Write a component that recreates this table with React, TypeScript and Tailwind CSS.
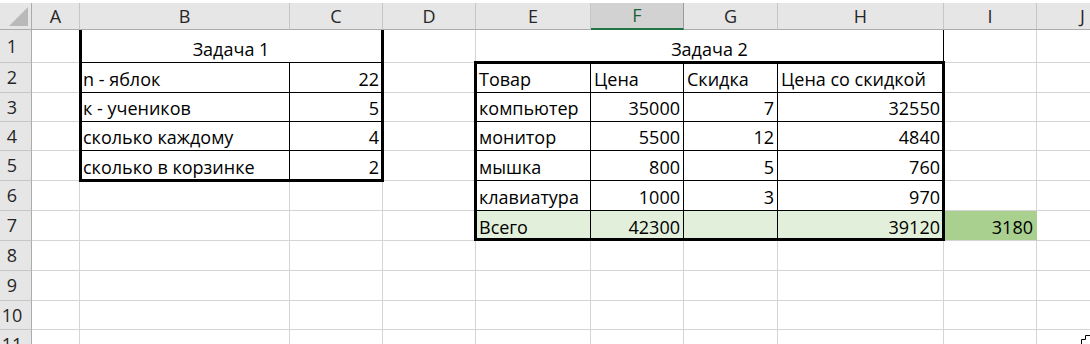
import type { ReactNode } from 'react';

type Cell = {
  text?: ReactNode;
  align?: 'left' | 'right' | 'center';
  span?: string;
  bg?: string;
  edge?: string;
};

const letters = ['A', 'B', 'C', 'D', 'E', 'F', 'G', 'H', 'I', 'J'];

const TRACKS =
  'grid grid-cols-[32px_48px_210px_93px_93px_115px_93px_94px_166px_93px_92px] grid-rows-[27px_33px_30px_29px_29px_30px_30px_30px_30px_30px_29px_30px]';

const GRID = 'border-r border-b border-r-[#d4d4d4] border-b-[#d4d4d4]';
const INK = 'border-r border-b border-r-black border-b-black';
const FILL_EDGE = 'border-r border-b border-r-[#a9d08e] border-b-[#d4d4d4]';

// sheet contents, keyed by row then column letter
const sheet: Record<number, Record<string, Cell>> = {
  1: {
    B: { text: 'Задача 1', align: 'center', span: 'col-span-2', edge: INK },
    E: { text: 'Задача 2', align: 'center', span: 'col-span-4', edge: INK },
  },
  2: {
    B: { text: 'n - яблок', edge: INK },
    C: { text: '22', align: 'right', edge: INK },
    E: { text: 'Товар', edge: INK },
    F: { text: 'Цена', edge: INK },
    G: { text: 'Скидка', edge: INK },
    H: { text: 'Цена со скидкой', edge: INK },
  },
  3: {
    B: { text: 'к - учеников', edge: INK },
    C: { text: '5', align: 'right', edge: INK },
    E: { text: 'компьютер', edge: INK },
    F: { text: '35000', align: 'right', edge: INK },
    G: { text: '7', align: 'right', edge: INK },
    H: { text: '32550', align: 'right', edge: INK },
  },
  4: {
    B: { text: 'сколько каждому', edge: INK },
    C: { text: '4', align: 'right', edge: INK },
    E: { text: 'монитор', edge: INK },
    F: { text: '5500', align: 'right', edge: INK },
    G: { text: '12', align: 'right', edge: INK },
    H: { text: '4840', align: 'right', edge: INK },
  },
  5: {
    B: { text: 'сколько в корзинке', edge: INK },
    C: { text: '2', align: 'right', edge: INK },
    E: { text: 'мышка', edge: INK },
    F: { text: '800', align: 'right', edge: INK },
    G: { text: '5', align: 'right', edge: INK },
    H: { text: '760', align: 'right', edge: INK },
  },
  6: {
    E: { text: 'клавиатура', edge: INK },
    F: { text: '1000', align: 'right', edge: INK },
    G: { text: '3', align: 'right', edge: INK },
    H: { text: '970', align: 'right', edge: INK },
  },
  7: {
    E: { text: 'Всего', edge: INK, bg: 'bg-[#e2efda]' },
    F: { text: '42300', align: 'right', edge: INK, bg: 'bg-[#e2efda]' },
    G: { edge: INK, bg: 'bg-[#e2efda]' },
    H: { text: '39120', align: 'right', edge: INK, bg: 'bg-[#e2efda]' },
    I: { text: '3180', align: 'right', edge: FILL_EDGE, bg: 'bg-[#a9d08e]' },
  },
};

// columns hidden under a merged cell
const merged: Record<number, string[]> = { 1: ['C', 'F', 'G', 'H'] };

const alignClass = {
  left: 'justify-start',
  right: 'justify-end',
  center: 'justify-center',
};

function SheetCell({ cell }: { cell?: Cell }) {
  const c = cell ?? {};
  return (
    <div
      className={`flex items-end overflow-hidden whitespace-nowrap px-[3px] pb-[2px] leading-[22px] text-black ${
        alignClass[c.align ?? 'left']
      } ${c.span ?? ''} ${c.bg ?? 'bg-white'} ${c.edge ?? GRID}`}
    >
      {c.text}
    </div>
  );
}

function ColumnHeader({ letter }: { letter: string }) {
  const active = letter === 'F';
  return (
    <div
      className={`flex items-center justify-center border-r ${
        active
          ? 'border-r-[#9b9b9b] border-b-2 border-b-[#217346] bg-[#d2d2d2] text-[#1d5f3a]'
          : 'border-r-[#c6c6c6] border-b border-b-[#ababab] bg-[#e6e6e6] text-[#262626]'
      }`}
    >
      {letter}
    </div>
  );
}

export default function App() {
  const rows = Array.from({ length: 11 }, (_, i) => i + 1);

  return (
    <div
      className="relative h-[344px] w-[1090px] overflow-hidden bg-white text-[18px]"
      style={{ fontFamily: '"Open Sans", "Liberation Sans", sans-serif' }}
    >
      <div className="h-[3px] bg-white" />
      <div className="grid">
        {/* cells */}
        <div className={`${TRACKS} [grid-area:1/1]`}>
          <div className="flex items-end justify-end border-r border-b border-r-[#ababab] border-b-[#ababab] bg-[#e6e6e6] p-[3px]">
            <svg width="19" height="19" viewBox="0 0 19 19">
              <path d="M19 0 L19 19 L0 19 Z" fill="#b9b9b9" />
            </svg>
          </div>
          {letters.map((l) => (
            <ColumnHeader key={l} letter={l} />
          ))}

          {rows.map((r) => (
            <div key={r} className="contents">
              <div className="flex items-center justify-center border-r border-b border-r-[#ababab] border-b-[#c6c6c6] bg-[#e6e6e6] pr-[7px] text-[#262626]">
                {r}
              </div>
              {letters
                .filter((l) => !(merged[r] ?? []).includes(l))
                .map((l) => (
                  <SheetCell key={l} cell={sheet[r]?.[l]} />
                ))}
            </div>
          ))}
        </div>

        {/* thick table outlines, laid on the same tracks */}
        <div className={`${TRACKS} pointer-events-none [grid-area:1/1]`}>
          <div className="col-start-3 col-end-5 row-start-2 row-end-7 -ml-px -mr-px -mb-px border-[3px] border-t-0 border-black" />
          <div className="col-start-6 col-end-10 row-start-3 row-end-9 -ml-[2px] -mr-px -mt-[2px] border-[3px] border-black" />
        </div>
      </div>

      {/* mouse pointer peeking in at the corner */}
      <svg className="absolute right-0 bottom-0" width="9" height="10" viewBox="0 0 9 10">
        <path d="M9 1.5 H4.5 V5.5 H0.5 V10" fill="none" stroke="#000" strokeWidth="1" />
      </svg>
    </div>
  );
}
